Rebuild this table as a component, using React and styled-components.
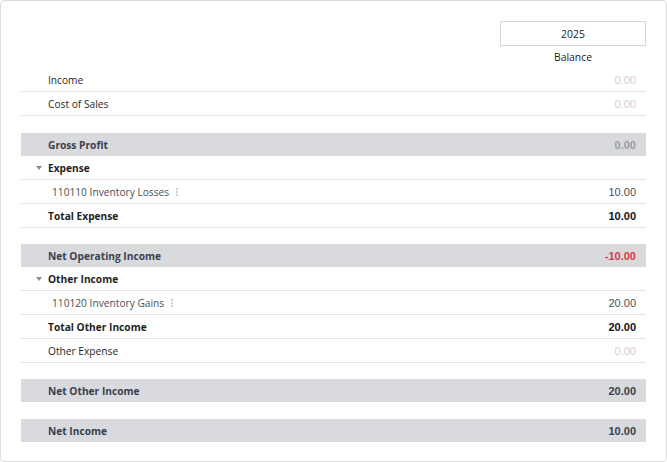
import React from "react";
import styled, { createGlobalStyle } from "styled-components";

const GlobalStyle = createGlobalStyle`
	html, body {
		margin: 0;
		padding: 0;
		background: #ffffff;
	}
	body {
		font-family: "Open Sans", "Noto Sans", sans-serif;
	}
`;

const Card = styled.div`
	box-sizing: border-box;
	width: 667px;
	height: 462px;
	border: 1px solid #dcdcdc;
	border-radius: 4px;
	padding: 20px 20px 20px 20px;
	background: #fff;
`;

const Header = styled.div`
	display: flex;
	flex-direction: column;
	align-items: flex-end;
`;

const YearBox = styled.div`
	box-sizing: border-box;
	width: 146px;
	height: 25px;
	border: 1px solid #d6d6d6;
	display: flex;
	align-items: center;
	justify-content: center;
	font-size: 10.4px;
	color: #222;
`;

const ColumnTitle = styled.div`
	width: 146px;
	height: 22px;
	display: flex;
	align-items: center;
	justify-content: center;
	font-size: 10.4px;
	color: #222;
`;

const Row = styled.div`
	display: flex;
	align-items: center;
	justify-content: space-between;
	height: 23px;
	border-bottom: ${(p) => (p.$band ? "none" : "1px solid #e4e4e4")};
	background: ${(p) => (p.$band ? "#d9dadd" : "transparent")};
	padding: 0 10px 0 ${(p) => (p.$item ? "31px" : "27px")};
	position: relative;
`;

const Spacer = styled.div`
	height: ${(p) => p.$h || 16}px;
`;

const Label = styled.span`
	display: flex;
	align-items: center;
	font-size: 10.2px;
	font-weight: ${(p) => (p.$bold ? 700 : 400)};
	color: ${(p) => (p.$band ? "#3a404d" : p.$item ? "#4b4f57" : "#1f1f1f")};
`;

const Caret = styled.span`
	position: absolute;
	left: 15px;
	top: 50%;
	margin-top: -2px;
	width: 0;
	height: 0;
	border-left: 3px solid transparent;
	border-right: 3px solid transparent;
	border-top: 4px solid #8a8a8a;
`;

const Dots = styled.span`
	display: inline-flex;
	flex-direction: column;
	gap: 1px;
	margin-left: 7px;
	span {
		width: 2px;
		height: 2px;
		background: #d0d0d0;
	}
`;

const Amount = styled.span`
	font-family: "Liberation Sans", Arial, sans-serif;
	font-size: 11px;
	font-weight: ${(p) => (p.$bold ? 700 : 400)};
	color: ${(p) => p.$color};
`;

const rows = [
	{ type: "row", label: "Income", value: "0.00", tone: "zero" },
	{ type: "row", label: "Cost of Sales", value: "0.00", tone: "zero" },
	{ type: "gap", h: 17 },
	{ type: "band", label: "Gross Profit", value: "0.00", tone: "bandZero" },
	{ type: "group", label: "Expense" },
	{ type: "item", label: "110110 Inventory Losses", value: "10.00" },
	{ type: "total", label: "Total Expense", value: "10.00" },
	{ type: "gap" },
	{ type: "band", label: "Net Operating Income", value: "-10.00", tone: "neg" },
	{ type: "group", label: "Other Income" },
	{ type: "item", label: "110120 Inventory Gains", value: "20.00" },
	{ type: "total", label: "Total Other Income", value: "20.00" },
	{ type: "row", label: "Other Expense", value: "0.00", tone: "zero" },
	{ type: "gap" },
	{ type: "band", label: "Net Other Income", value: "20.00" },
	{ type: "gap", h: 17 },
	{ type: "band", label: "Net Income", value: "10.00" },
];

const amountColor = (r) => {
	if (r.tone === "zero") return "#cfcfcf";
	if (r.tone === "bandZero") return "#9a9ca3";
	if (r.tone === "neg") return "#d8383d";
	if (r.type === "band") return "#3a404d";
	if (r.type === "total") return "#111";
	return "#4b4f57";
};

const App = () => {
	return (
		<>
			<GlobalStyle />
			<Card>
				<Header>
					<YearBox>2025</YearBox>
					<ColumnTitle>Balance</ColumnTitle>
				</Header>
				{rows.map((r, i) => {
					if (r.type === "gap") return <Spacer key={i} $h={r.h} />;
					const isBand = r.type === "band";
					const isItem = r.type === "item";
					const bold = isBand || r.type === "total" || r.type === "group";
					return (
						<Row key={i} $band={isBand} $item={isItem}>
							{r.type === "group" && <Caret />}
							<Label $bold={bold} $band={isBand} $item={isItem}>
								{r.label}
								{isItem && (
									<Dots>
										<span />
										<span />
										<span />
									</Dots>
								)}
							</Label>
							{r.value && (
								<Amount $bold={bold} $color={amountColor(r)}>
									{r.value}
								</Amount>
							)}
						</Row>
					);
				})}
			</Card>
		</>
	);
};

export default App;
